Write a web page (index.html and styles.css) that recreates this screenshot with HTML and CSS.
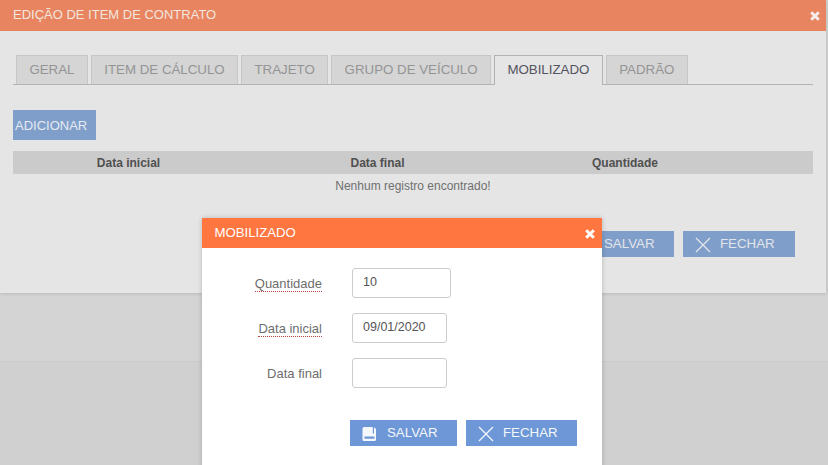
FILE: index.html
```html
<!DOCTYPE html>
<html lang="pt-BR">
<head>
<meta charset="utf-8">
<title>Edição de item de contrato</title>
<link rel="stylesheet" href="styles.css">
</head>
<body>
<div class="page">
  <section class="panel">
    <header class="panel-head">
      <span>EDIÇÃO DE ITEM DE CONTRATO</span>
      <svg class="close-icon" viewBox="0 0 10 10" aria-hidden="true"><path d="M1.200 1.200 8.800 8.800M8.800 1.200 1.200 8.800"/></svg>
    </header>
    <div class="panel-body">
      <nav class="tabs">
        <a class="tab">GERAL</a>
        <a class="tab">ITEM DE CÁLCULO</a>
        <a class="tab">TRAJETO</a>
        <a class="tab">GRUPO DE VEÍCULO</a>
        <a class="tab active">MOBILIZADO</a>
        <a class="tab">PADRÃO</a>
      </nav>
      <button class="add-btn">ADICIONAR</button>
      <div class="table-head">
        <span>Data inicial</span>
        <span>Data final</span>
        <span>Quantidade</span>
      </div>
      <p class="empty">Nenhum registro encontrado!</p>
      <div class="actions panel-actions">
        <button class="btn muted">
          <svg class="icon" viewBox="0 0 16 16" aria-hidden="true"><path class="fill" d="M2 1H10.800V7.500H12V1.200L14 3V13.500A1.500 1.500 0 0 1 12.500 15H2A1.500 1.500 0 0 1 .5 13.500V2.500A1.500 1.500 0 0 1 2 1ZM2.500 10.500V12.800H12.500V10.500Z"/></svg>
          SALVAR
        </button>
        <button class="btn muted">
          <svg class="icon" viewBox="0 0 16 16" aria-hidden="true"><path d="M1 1 15 15M15 1 1 15"/></svg>
          FECHAR
        </button>
      </div>
    </div>
  </section>
  <div class="band"></div>

  <section class="dialog">
    <header class="dialog-head">
      <span>MOBILIZADO</span>
      <svg class="close-icon" viewBox="0 0 10 10" aria-hidden="true"><path d="M1.200 1.200 8.800 8.800M8.800 1.200 1.200 8.800"/></svg>
    </header>
    <form class="form">
      <label class="lbl req">Quantidade</label>
      <input class="field wide" value="10">
      <label class="lbl req">Data inicial</label>
      <input class="field" value="09/01/2020">
      <label class="lbl">Data final</label>
      <input class="field" value="">
    </form>
    <div class="actions dialog-actions">
      <button class="btn">
        <svg class="icon" viewBox="0 0 16 16" aria-hidden="true"><path class="fill" d="M2 1H10.800V7.500H12V1.200L14 3V13.500A1.500 1.500 0 0 1 12.500 15H2A1.500 1.500 0 0 1 .5 13.500V2.500A1.500 1.500 0 0 1 2 1ZM2.500 10.500V12.800H12.500V10.500Z"/></svg>
        SALVAR
      </button>
      <button class="btn">
        <svg class="icon" viewBox="0 0 16 16" aria-hidden="true"><path d="M1 1 15 15M15 1 1 15"/></svg>
        FECHAR
      </button>
    </div>
  </section>
</div>
</body>
</html>
```
FILE: styles.css
```css
* { box-sizing: border-box; }
html, body { margin: 0; height: 100%; overflow: hidden; }
body { font-family: "Liberation Sans", Arial, sans-serif; background: #d0d0d0; }
.page { position: relative; width: 828px; height: 465px; overflow: hidden; }

.panel { width: 826px; height: 293px; background: #e5e5e5; box-shadow: 0 1px 3px rgba(0,0,0,.12); position: relative; z-index: 1; }
.panel-head { height: 31px; background: #e8845f; color: #f3e6df; font-size: 13px; padding: 0 6px 3px 13px; display: flex; align-items: center; justify-content: space-between; }
.close-icon { width: 10px; height: 10px; margin-top: 3px; }
.close-icon path { stroke: #fff; stroke-width: 3; fill: none; }
.panel-head .close-icon path { stroke: #f3eeeb; }
.panel-body { padding: 24px 13px 0; position: relative; }

.tabs { display: flex; gap: 3px; height: 30px; padding-left: 3px; border-bottom: 1px solid #b3b3b3; }
.tab { height: 29px; padding: 0 12.400px; line-height: 27px; font-size: 13.300px; color: #949494; background: #d5d5d5; border: 1px solid #c6c6c6; border-bottom: 0; }
.tab.active { height: 30px; background: #e5e5e5; color: #53535f; border-color: #b3b3b3; }

.add-btn { display: block; margin-top: 25px; width: 83px; height: 30px; padding: 0 2px; text-align: left; font: 13px "Liberation Sans", Arial, sans-serif; color: #e6ebf3; background: #7f9ec9; border: 0; }

.table-head { margin-top: 11px; height: 23px; background: #cbcbcb; display: grid; grid-template-columns: 231px 267px 228px 1fr; align-items: center; font-size: 12px; font-weight: bold; color: #505050; text-align: center; }
.empty { margin: 5px 0 0; font-size: 12px; line-height: 14px; text-align: center; color: #707070; }

.actions { display: flex; }
.panel-actions { position: absolute; left: 567px; top: 200px; gap: 8px; }
.dialog-actions { margin: 32px 0 0 148px; gap: 9px; }
.btn { width: 107px; height: 26px; padding: 0 0 2px 12px; display: flex; align-items: center; gap: 9px; font: 13.300px "Liberation Sans", Arial, sans-serif; color: #f4f7fc; background: #6d97d6; border: 0; }
.btn + .btn { width: 111px; }
.btn.muted { background: #7f9ec9; color: #e2e5ea; }
.btn.muted + .btn.muted { width: 112px; margin-left: 1px; }
.icon { width: 16px; height: 16px; margin-top: 3px; flex: none; }
.icon path { stroke: currentColor; stroke-width: 1.300; fill: none; }
.icon path.fill { fill: currentColor; stroke: none; fill-rule: evenodd; }

.band { height: 69px; background: #d4d4d4; border-bottom: 1px solid #cbcbcb; }

.dialog { position: absolute; z-index: 2; left: 202px; top: 218px; width: 400px; height: 260px; background: #fff; box-shadow: 0 0 5px rgba(0,0,0,.2); }
.dialog-head { height: 30px; background: #ff7640; color: #fff; font-size: 13.200px; padding: 0 7px 2px 12.500px; display: flex; align-items: center; justify-content: space-between; }
.form { display: grid; grid-template-columns: 120px 1fr; column-gap: 30px; row-gap: 15px; padding-top: 20px; justify-items: start; align-items: center; }
.lbl { justify-self: end; font-size: 13px; line-height: 15px; color: #6e6e6e; }
.lbl.req { border-bottom: 1px dotted #b2443a; margin-top: 1px; }
.field { width: 95px; height: 30px; padding: 0 10px 2px; font: 12.500px "Liberation Sans", Arial, sans-serif; color: #555; background: #fff; border: 1px solid #ccc; border-radius: 3px; outline: 0; }
.field.wide { width: 99px; }
```
